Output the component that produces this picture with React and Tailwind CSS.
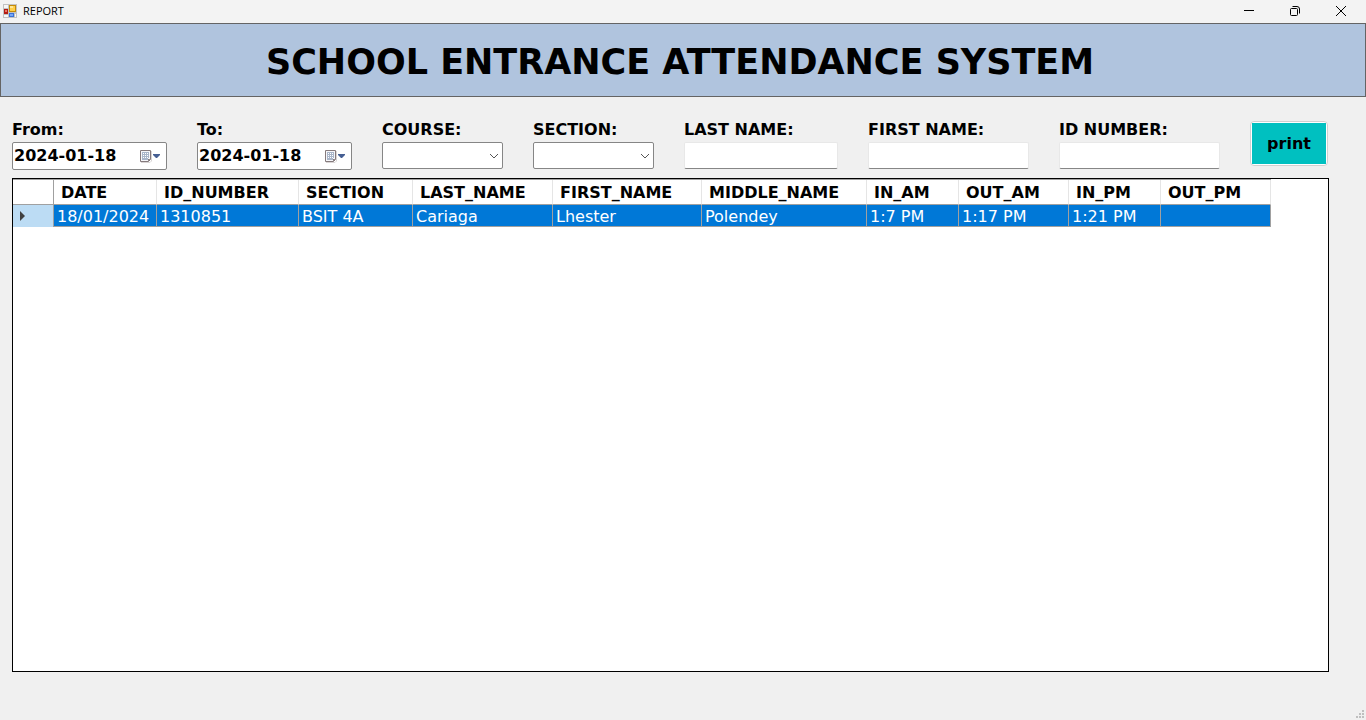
import React from "react";

const columns = [
  { name: "DATE", width: "w-[103px]", value: "18/01/2024" },
  { name: "ID_NUMBER", width: "w-[142px]", value: "1310851" },
  { name: "SECTION", width: "w-[114px]", value: "BSIT 4A" },
  { name: "LAST_NAME", width: "w-[140px]", value: "Cariaga" },
  { name: "FIRST_NAME", width: "w-[149px]", value: "Lhester" },
  { name: "MIDDLE_NAME", width: "w-[165px]", value: "Polendey" },
  { name: "IN_AM", width: "w-[92px]", value: "1:7 PM" },
  { name: "OUT_AM", width: "w-[110px]", value: "1:17 PM" },
  { name: "IN_PM", width: "w-[92px]", value: "1:21 PM" },
  { name: "OUT_PM", width: "w-[110px]", value: "" },
];

function AppIcon() {
  return (
    <svg width="14" height="14" viewBox="0 0 14 14" aria-hidden="true">
      <rect width="14" height="14" fill="#c2c2c2" />
      <path d="M1 1h4v3H1zM1 11h4v2H1zM12 10h1v3h-1z" fill="#f7f7f7" />
      <rect x="1" y="5" width="4" height="5" fill="#b51c12" />
      <rect x="2" y="6" width="2" height="2" fill="#ec7466" />
      <rect x="6" y="1" width="7" height="7" fill="#c58b08" />
      <rect x="7" y="2" width="5" height="5" fill="#ffcf4a" />
      <rect x="7" y="2" width="3" height="2" fill="#ffe795" />
      <rect x="6" y="9" width="5" height="4" fill="#3a70d8" />
      <rect x="7" y="10" width="3" height="2" fill="#79a8f5" />
    </svg>
  );
}

function CalendarIcon() {
  return (
    <svg width="20" height="14" viewBox="0 0 20 14" aria-hidden="true">
      <path d="M1 13.500h9l1.500-1.500V2" fill="none" stroke="#d9d5d5" />
      <path d="M.5 1.500h10v9l-2 2h-8z" fill="#f6f6f9" stroke="#857a7c" />
      <path d="M2 3h7v6H8v2H2z" fill="#a9b5c9" />
      <path d="M3 4h1v1H3zM5 4h1v1H5zM7 4h1v1H7zM3 6h1v1H3zM5 6h1v1H5zM7 6h1v1H7zM3 8h1v1H3zM5 8h1v1H5zM7 8h1v1H7z" fill="#fff" />
      <path d="M8 12.500V10h2.500z" fill="#857a7c" />
      <path d="M13 5h7v1l-3 3h-1l-3-3z" fill="#465f93" />
    </svg>
  );
}

function Field({ id, label, className, children }) {
  return (
    <div className={`flex shrink-0 flex-col ${className}`}>
      <label htmlFor={id} className="whitespace-nowrap leading-5 font-bold">
        {label}
      </label>
      {children}
    </div>
  );
}

function DateField({ id, label }) {
  return (
    <Field id={id} label={label} className="w-[155px]">
      <div className="mt-0.5 flex h-7 items-center rounded-xs border border-[#868686] bg-white pr-[6px]">
        <input
          id={id}
          type="text"
          defaultValue="2024-01-18"
          className="min-w-0 flex-1 bg-transparent pl-px leading-5 font-bold outline-none"
        />
        <button type="button" aria-label={`${label} open calendar`} className="flex">
          <CalendarIcon />
        </button>
      </div>
    </Field>
  );
}

function SelectField({ id, label }) {
  return (
    <Field id={id} label={label} className="w-[121px]">
      <div className="relative mt-0.5">
        <select
          id={id}
          defaultValue=""
          className="block h-[27px] w-full appearance-none rounded-xs border border-[#868686] bg-white px-1 outline-none"
        >
          <option value=""></option>
        </select>
        <svg
          className="pointer-events-none absolute top-[11px] right-1"
          width="10"
          height="7"
          viewBox="0 0 10 7"
          fill="none"
          stroke="#555"
          aria-hidden="true"
        >
          <path d="M1 1l4 4 4-4" />
        </svg>
      </div>
    </Field>
  );
}

function TextField({ id, label, className }) {
  return (
    <Field id={id} label={label} className={className}>
      <input
        id={id}
        type="text"
        className="mt-0.5 h-[27px] w-full rounded-xs border border-[#e8e8e8] border-b-[#868686] bg-white px-1 outline-none"
      />
    </Field>
  );
}

export default function App() {
  return (
    <div className="flex min-h-screen flex-col bg-[#f0f0f0] font-['DejaVu_Sans',Verdana,sans-serif] text-base text-black">
      <header className="flex h-[23px] items-center bg-[#f3f3f3] pr-0.5 pb-0.5 pl-[3px]">
        <AppIcon />
        <span className="ml-1.5 flex-1 font-['Open_Sans',sans-serif] text-[11px] leading-4">REPORT</span>
        <div className="flex h-5">
          <button type="button" aria-label="Minimize" className="flex w-[46px] items-center justify-center">
            <svg width="10" height="10" viewBox="0 0 10 10" stroke="#000" aria-hidden="true">
              <path d="M0 4.500h10" />
            </svg>
          </button>
          <button type="button" aria-label="Restore" className="flex w-[46px] items-center justify-center">
            <svg width="10" height="10" viewBox="0 0 10 10" fill="none" stroke="#000" aria-hidden="true">
              <rect x=".5" y="2.500" width="7" height="7" rx="1" />
              <path d="M2.500.5H7A2.500 2.500 0 0 1 9.500 3v4.500" />
            </svg>
          </button>
          <button type="button" aria-label="Close" className="flex w-[46px] items-center justify-center">
            <svg width="10" height="10" viewBox="0 0 10 10" stroke="#000" aria-hidden="true">
              <path d="M0 0l10 10M10 0L0 10" />
            </svg>
          </button>
        </div>
      </header>

      <div className="flex h-[74px] items-center justify-center border border-[#646464] bg-[#b0c4de] pt-1">
        <h1 className="pr-1.5 text-[35px] leading-10 font-bold whitespace-nowrap">
          SCHOOL ENTRANCE ATTENDANCE SYSTEM
        </h1>
      </div>

      <main className="flex flex-1 flex-col pt-[23px] pr-[37px] pb-12 pl-3">
        <form className="flex gap-[30px]" onSubmit={(event) => event.preventDefault()}>
          <DateField id="from" label="From:" />
          <DateField id="to" label="To:" />
          <SelectField id="course" label="COURSE:" />
          <SelectField id="section" label="SECTION:" />
          <TextField id="last-name" label="LAST NAME:" className="w-[154px]" />
          <TextField id="first-name" label="FIRST NAME:" className="w-[161px]" />
          <TextField id="id-number" label="ID NUMBER:" className="w-[161px]" />
          <button
            type="submit"
            className="mt-px h-[45px] w-[78px] shrink-0 rounded-sm border border-[#d0d0d0] bg-white p-px font-bold"
          >
            <span className="flex h-full items-center justify-center bg-[#00c0c0]">print</span>
          </button>
        </form>

        <section className="mt-2 flex-1 border border-black bg-white">
          <table className="w-[1258px] table-fixed border-separate border-spacing-0 border-t border-[#a0a0a0]">
            <thead>
              <tr className="h-[25px]">
                <th className="w-[41px] border-r border-b border-[#a0a0a0]" />
                {columns.map((column) => (
                  <th
                    key={column.name}
                    scope="col"
                    className={`${column.width} border-r border-b border-r-[#e5e5e5] border-b-[#a0a0a0] p-0 pt-0.5 pl-[7px] text-left leading-5 font-bold whitespace-nowrap`}
                  >
                    {column.name}
                  </th>
                ))}
              </tr>
            </thead>
            <tbody>
              <tr className="h-[22px] bg-[#0078d7] text-white">
                <th scope="row" aria-label="Selected row" className="border-r border-[#a0a0a0] bg-[#bcdcf4] p-0 pl-[7px]">
                  <svg width="6" height="10" viewBox="0 0 6 10" aria-hidden="true">
                    <path d="M0 0l5 5-5 5z" fill="#404040" />
                  </svg>
                </th>
                {columns.map((column) => (
                  <td
                    key={column.name}
                    className="border-r border-b border-[#a0a0a0] p-0 pt-0.5 pl-[3px] leading-[19px] whitespace-nowrap"
                  >
                    {column.value}
                  </td>
                ))}
              </tr>
            </tbody>
          </table>
        </section>
      </main>

      <svg className="fixed right-0.5 bottom-0.5" width="8" height="8" viewBox="0 0 8 8" fill="#bfbfbf" aria-hidden="true">
        <path d="M6 0h2v2H6zM3 3h2v2H3zM6 3h2v2H6zM0 6h2v2H0zM3 6h2v2H3zM6 6h2v2H6z" />
      </svg>
    </div>
  );
}
